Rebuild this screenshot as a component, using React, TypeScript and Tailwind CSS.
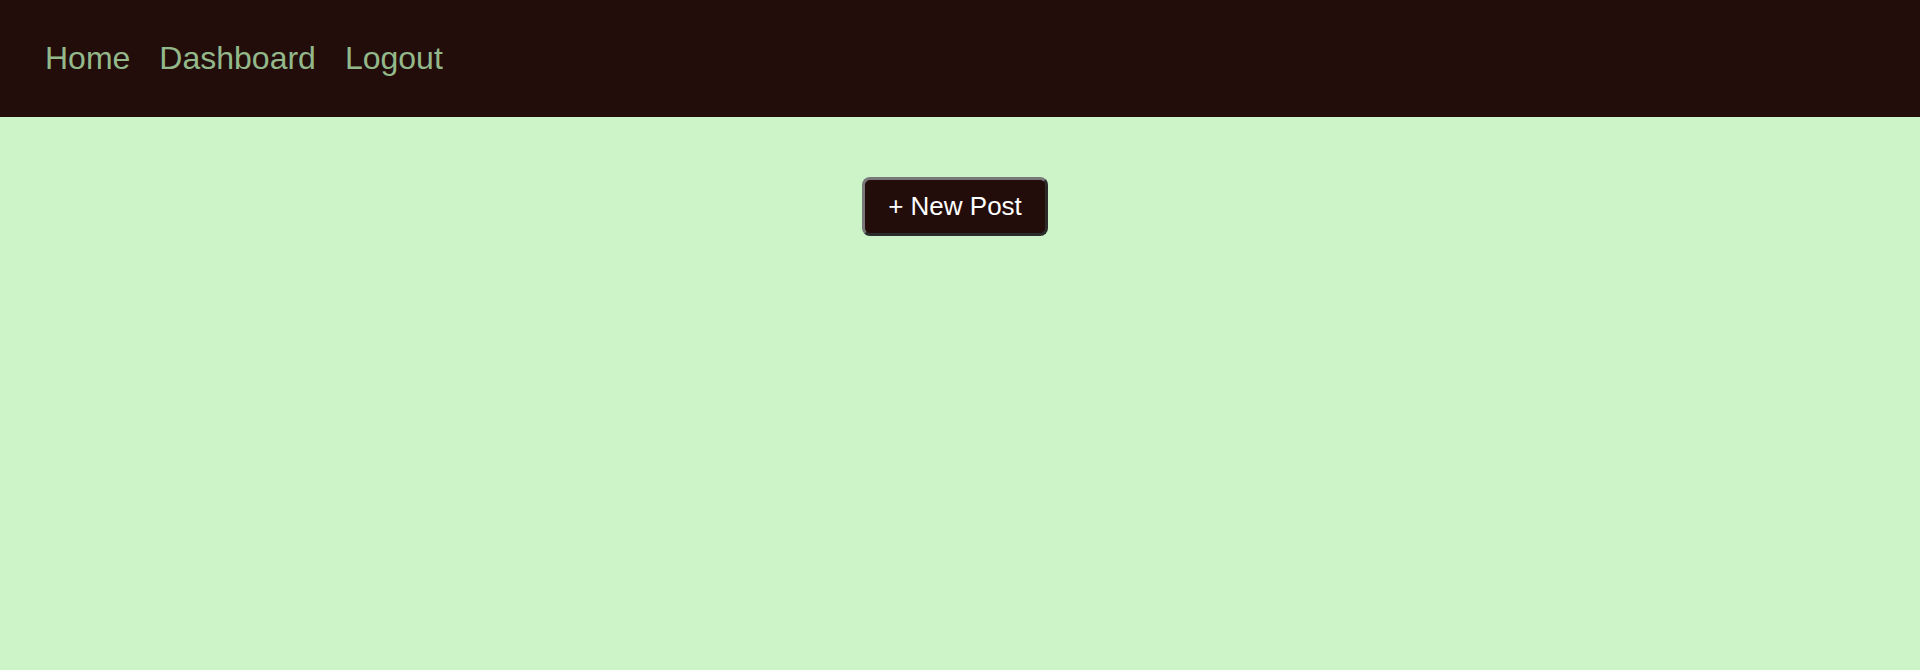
export default function App() {
  return (
    <div className="min-h-[670px] bg-[#cdf4c8] font-['Liberation_Sans',Arial,sans-serif]">
      <nav className="h-[117px] bg-[#230d0b] flex items-center pl-[45px] pb-[2px] gap-[29px]">
        <a href="#" className="text-[32px] text-[#93b98b]">Home</a>
        <a href="#" className="text-[32px] text-[#93b98b]">Dashboard</a>
        <a href="#" className="text-[32px] text-[#93b98b]">Logout</a>
      </nav>

      <main className="flex justify-center pt-[60px] pr-[10px]">
        <button className="h-[59px] px-[23px] pb-[1px] bg-[#230d0b] text-white text-[26px] rounded-[8px] border-[3px] border-t-[#787878] border-l-[#787878] border-b-[#2b2b2b] border-r-[#2b2b2b]">
          + New Post
        </button>
      </main>
    </div>
  )
}
